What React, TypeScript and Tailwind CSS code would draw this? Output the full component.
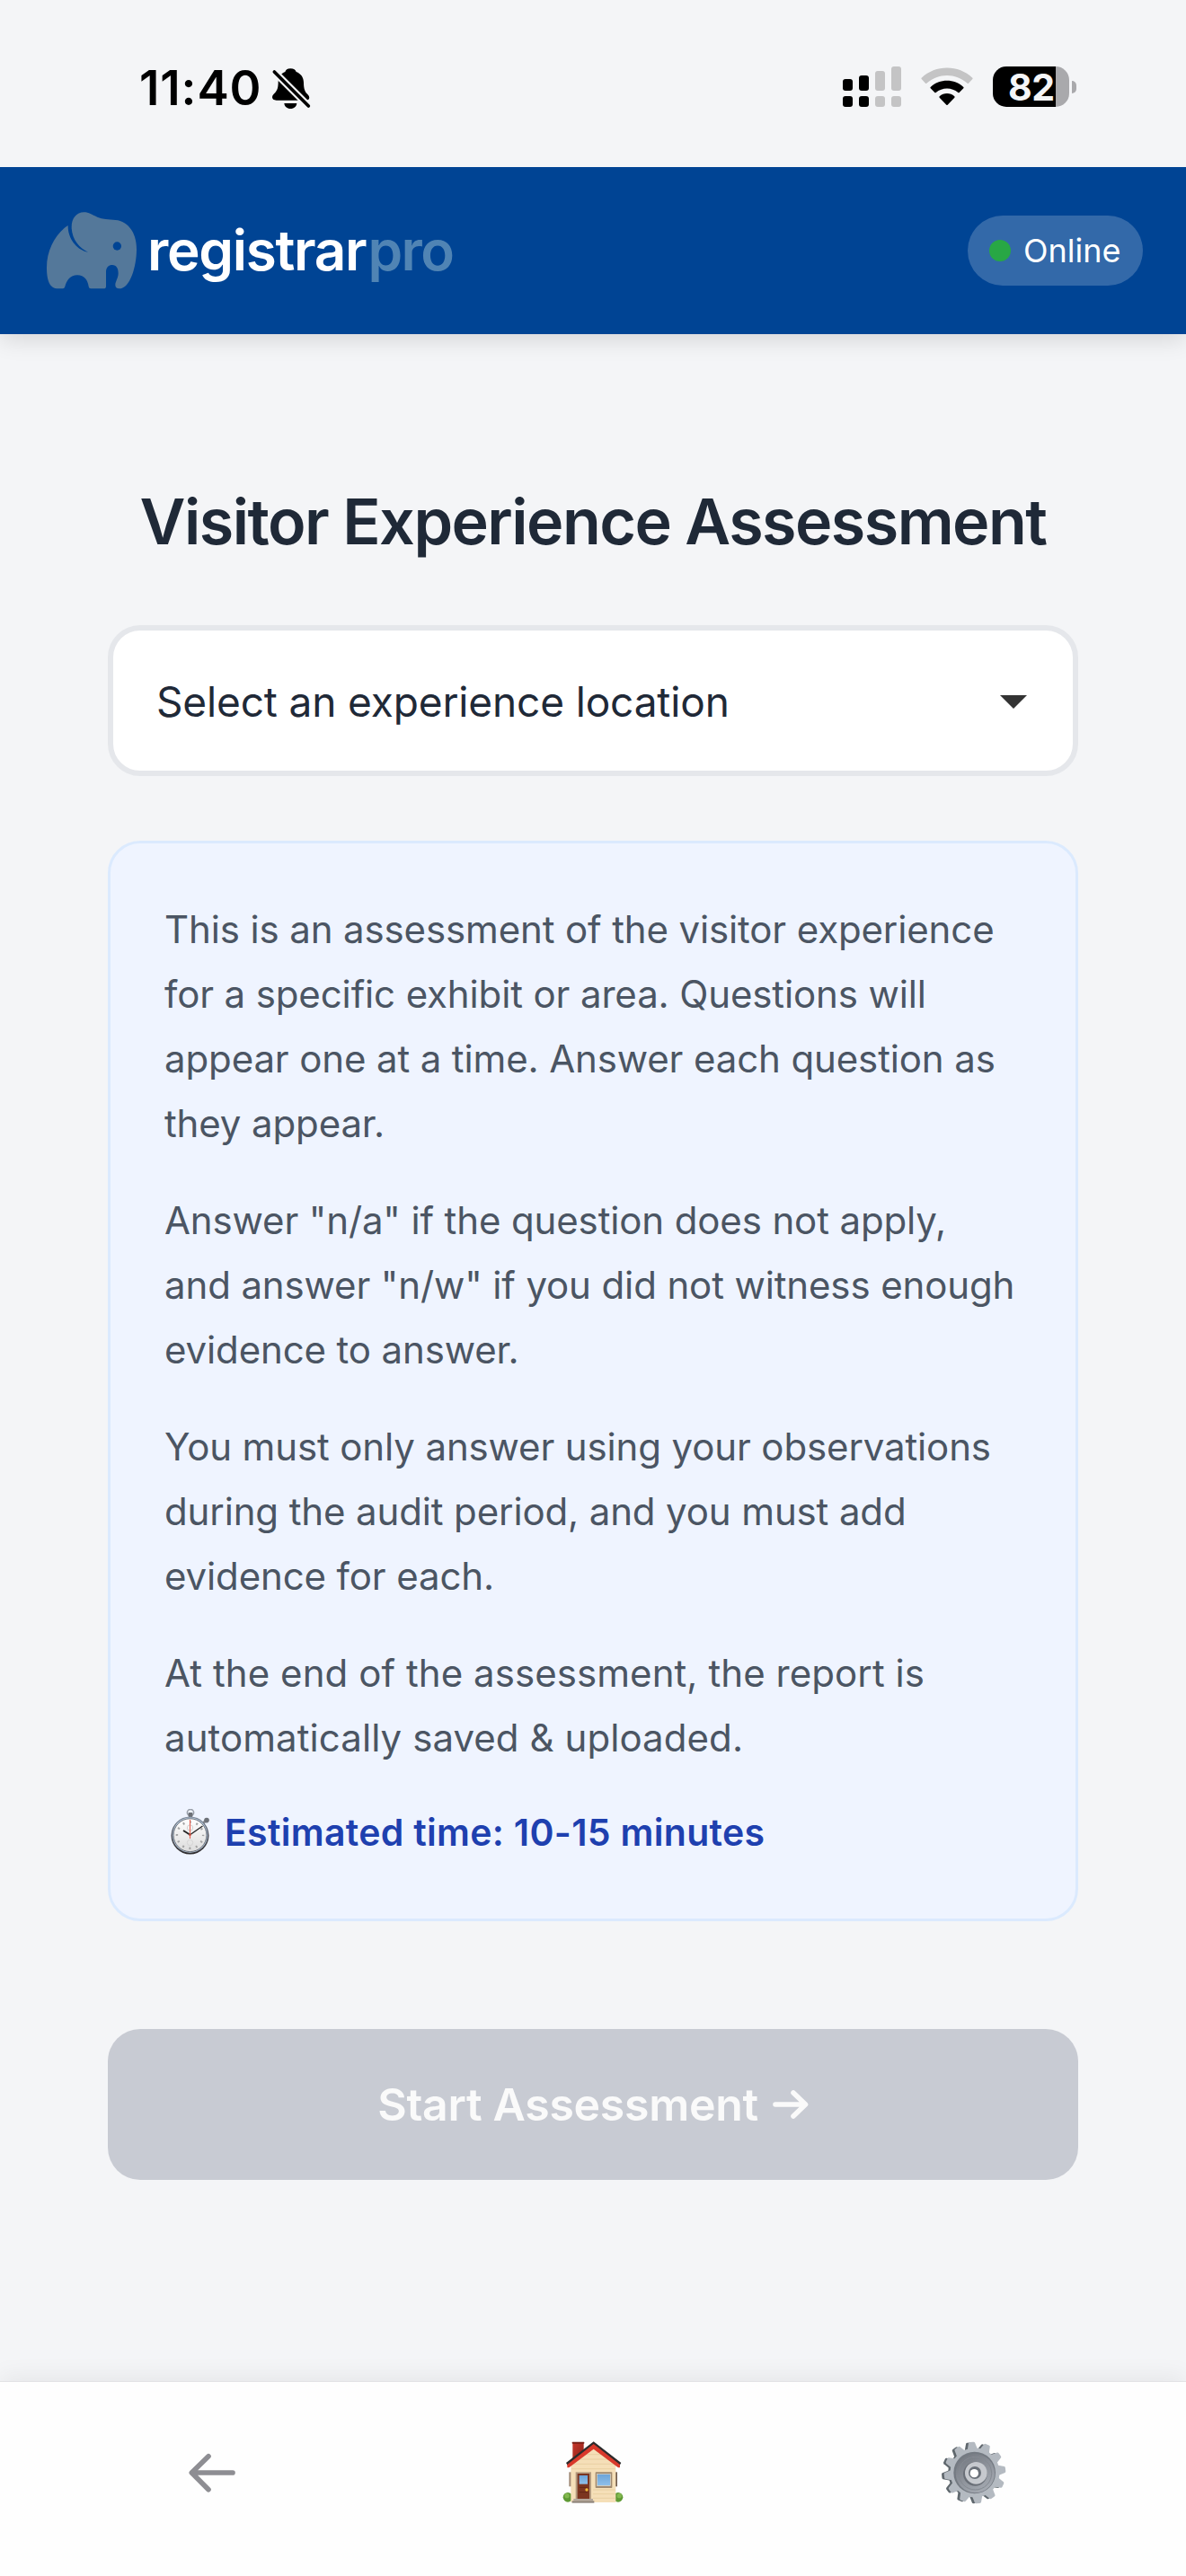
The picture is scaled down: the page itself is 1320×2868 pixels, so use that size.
import { useState } from "react";
import type { ReactNode } from "react";

const GEAR_TEETH = [0, 30, 60, 90, 120, 150, 180, 210, 240, 270, 300, 330];

const INSTRUCTIONS = [
  "This is an assessment of the visitor experience for a specific exhibit or area. Questions will appear one at a time. Answer each question as they appear.",
  'Answer "n/a" if the question does not apply, and answer "n/w" if you did not witness enough evidence to answer.',
  "You must only answer using your observations during the audit period, and you must add evidence for each.",
  "At the end of the assessment, the report is automatically saved & uploaded.",
];

function BellOffIcon() {
  return (
    <svg className="mt-[2px] ml-[11px] h-[48px] w-[45px]" viewBox="515 70 135 144">
      <path
        d="M579 77C590 77 596 82 598 88C614 94 623 107 623 124C623 146 628 156 636 163C641 168 643 173 641 178C639 182 634 183 629 183H532C523 183 518 179 518 173C518 166 523 163 528 157C535 149 538 141 538 122C538 104 547 93 561 88C563 82 568 77 579 77Z"
        fill="#000"
      />
      <path d="M558 193H600C599 204 591 211 579 211C567 211 559 204 558 193Z" fill="#000" />
      <path d="M525 88L639 202" stroke="#f4f5f7" strokeWidth="24" />
      <path d="M525 88L639 202" stroke="#000" strokeWidth="11" strokeLinecap="round" />
    </svg>
  );
}

function SignalIcon() {
  return (
    <svg className="h-[45px] w-[65px]" viewBox="81 72 195 135">
      <g fill="#000">
        <rect x="81" y="114" width="33" height="39" rx="9" />
        <rect x="135" y="102" width="33" height="51" rx="9" />
        <rect x="81" y="171" width="33" height="36" rx="9" />
        <rect x="135" y="171" width="33" height="36" rx="9" />
      </g>
      <g fill="#c4c4c5">
        <rect x="189" y="87" width="33" height="66" rx="9" />
        <rect x="243" y="72" width="33" height="81" rx="9" />
        <rect x="189" y="171" width="33" height="36" rx="9" />
        <rect x="243" y="171" width="33" height="36" rx="9" />
      </g>
    </svg>
  );
}

function WifiIcon() {
  return (
    <svg className="h-[43px] w-[58px]" viewBox="344 75 174 129">
      <path
        d="M346 110C392 65 470 65 516 110Q518 112 516 114L503 128Q501 130 499 128C460 93 402 93 363 128Q361 130 359 128L346 114Q344 112 346 110Z"
        fill="#c4c4c5"
      />
      <path
        d="M376 141C406 112 456 112 486 141Q488 143 486 145L472 159Q470 161 468 159C447 141 415 141 394 159Q392 161 390 159L376 145Q374 143 376 141Z"
        fill="#000"
      />
      <path d="M406 172C420 159 442 159 456 172Q458 174 456 176L433 200Q431 202 429 200L406 176Q404 174 406 172Z" fill="#000" />
    </svg>
  );
}

function Battery({ level }: { level: number }) {
  return (
    <div className="flex items-center gap-[3px]">
      <div className="flex h-[45px] w-[85px] items-center rounded-[15px] bg-[linear-gradient(90deg,#000_70px,#a9a9ac_70px)] pl-[17px]">
        <span className="text-[41px] leading-[50px] font-bold tracking-[-0.5px] text-[#f4f5f7]">{level}</span>
      </div>
      <div className="h-[14px] w-[5px] rounded-r-full bg-[#a9a9ac]" />
    </div>
  );
}

function StatusBar() {
  return (
    <div className="relative z-10 flex h-[186px] items-center justify-between bg-[#f4f5f7] pt-[7px] pr-[122px] pl-[155px]">
      <div className="flex items-center">
        <span className="mt-[3px] text-[53px] leading-[60px] font-semibold tracking-[0.9px] text-black">11:40</span>
        <BellOffIcon />
      </div>
      <div className="flex items-center gap-[22px]">
        <SignalIcon />
        <WifiIcon />
        <Battery level={82} />
      </div>
    </div>
  );
}

function ElephantLogo() {
  return (
    <svg className="h-[86px] w-[101px]" viewBox="66 65 303 258">
      <path
        d="M137 110C96 136 66 192 66 250C66 293 75 321 105 321H120Q125 321 127 314C132 294 145 276 168 276C192 276 203 293 206 314Q207 321 213 321H256Q264 321 264 313V266C264 250 273 242 285 242C299 242 305 254 305 270C305 286 295 298 295 309Q295 321 308 321C345 321 366 245 366 190C366 130 334 95 296 92C272 90 252 89 235 82C216 74 208 66 190 66C165 66 149 87 149 115C149 155 175 186 204 199C170 194 136 157 137 110Z"
        fill="#54789a"
      />
      <circle cx="301" cy="179" r="14" fill="#004494" />
    </svg>
  );
}

function Header() {
  return (
    <header className="relative flex h-[186px] items-center justify-between bg-[#004494] pr-[48px] pl-[52px] shadow-[0_6px_24px_rgba(0,0,0,0.13)]">
      <div className="flex items-center gap-[11px]">
        <ElephantLogo />
        <div className="flex text-[62px] leading-[72px] font-semibold">
          <span className="tracking-[-1.3px] text-white">registrar</span>
          <span className="ml-[2px] tracking-[-1.6px] text-[#5084b4]">pro</span>
        </div>
      </div>
      <div className="flex h-[78px] w-[195px] items-center gap-[14px] rounded-full bg-white/20 pl-[24px]">
        <span className="h-6 w-6 rounded-full bg-[#28a745]" />
        <span className="text-[36px] leading-[44px] text-white">Online</span>
      </div>
    </header>
  );
}

function LocationSelect() {
  return (
    <button className="flex h-[168px] w-full items-center justify-between rounded-[36px] border-[6px] border-[#e5e7eb] bg-white pr-[51px] pl-[48px]">
      <span className="pt-[2px] text-[46px] tracking-[-0.14px] text-[#1f2937]">Select an experience location</span>
      <svg className="mt-[3px] h-[15px] w-[30px]" viewBox="0 0 30 15">
        <path d="M0 0H30L15 15Z" fill="#333" />
      </svg>
    </button>
  );
}

function StopwatchIcon() {
  return (
    <svg className="h-[52px] w-[44px]" viewBox="0 0 44 52">
      <defs>
        <linearGradient id="rim" x1="0" y1="0" x2="0" y2="1">
          <stop offset="0" stopColor="#7e8896" />
          <stop offset="0.5" stopColor="#4e4f55" />
          <stop offset="1" stopColor="#2e2b2c" />
        </linearGradient>
        <linearGradient id="face" x1="0" y1="0" x2="0" y2="1">
          <stop offset="0" stopColor="#fff" />
          <stop offset="1" stopColor="#dcdcdc" />
        </linearGradient>
      </defs>
      <circle cx="22" cy="4" r="3.6" fill="none" stroke="#9aa0aa" strokeWidth="1.6" />
      <rect x="19.6" y="4" width="4.8" height="5" rx="1" fill="#6c7077" />
      <path d="M36 16L40 12" stroke="#85898f" strokeWidth="3" />
      <circle cx="40" cy="12.6" r="2.8" fill="#6c7077" />
      <circle cx="21.5" cy="29.5" r="21" fill="url(#rim)" />
      <circle cx="21.5" cy="29.2" r="19.6" fill="#b4c8de" />
      <circle cx="21.5" cy="29.2" r="18.4" fill="url(#face)" stroke="#55585e" strokeWidth="0.8" />
      <circle cx="21.5" cy="29.2" r="14.6" fill="none" stroke="#a3a3a3" strokeWidth="2.4" strokeDasharray="2 5.64" strokeDashoffset="1" />
      <circle cx="21.5" cy="21" r="3.2" fill="none" stroke="#c9c9c9" strokeWidth="0.8" />
      <circle cx="21.5" cy="37.5" r="3.2" fill="none" stroke="#d0d0d0" strokeWidth="0.8" />
      <path d="M14 24L21.5 28.7" stroke="#222" strokeWidth="1.9" />
      <path d="M21.5 28.7L35.5 19" stroke="#222" strokeWidth="1.3" />
      <path d="M21.5 12V33" stroke="#e8604f" strokeWidth="1.1" />
      <circle cx="21.5" cy="28.7" r="1.3" fill="#c8503f" />
    </svg>
  );
}

function InfoCard() {
  return (
    <section className="mt-[72px] h-[1203px] rounded-[36px] border-[3px] border-[#dbeafe] bg-[#eff4ff] p-[60px]">
      <div className="space-y-[36px]">
        {INSTRUCTIONS.map((text) => (
          <p key={text} className="text-[42px] leading-[72px] tracking-[-0.13px] text-[#4b5563] last-of-type:tracking-[0.07px]">
            {text}
          </p>
        ))}
        <div className="flex h-[66px] items-center pl-[7px]">
          <StopwatchIcon />
          <span className="ml-[16px] text-[41px] leading-[66px] font-semibold tracking-[0.3px] text-[#1e40af]">
            Estimated time: 10-15 minutes
          </span>
        </div>
      </div>
    </section>
  );
}

function StartButton() {
  return (
    <button disabled className="mt-[120px] flex h-[168px] w-full items-center justify-center rounded-[36px] bg-[#c8cbd3] text-[#fafafa]">
      <span className="text-[50px] leading-[60px] font-semibold tracking-[-0.3px]">Start Assessment</span>
      <svg className="ml-[16px] h-[34px] w-[40px]" viewBox="0 0 40 34" fill="none" stroke="currentColor" strokeWidth="5.6" strokeLinecap="round" strokeLinejoin="round">
        <path d="M3 17H36M23 4L36.5 17L23 30" />
      </svg>
    </button>
  );
}

function BackIcon() {
  return (
    <svg className="h-[44px] w-[52px]" viewBox="88 271 156 132" fill="none" stroke="#8e8e93" strokeWidth="17" strokeLinecap="round" strokeLinejoin="round">
      <path d="M235 337H99M154 282L98 337L154 393" />
    </svg>
  );
}

function HouseIcon() {
  return (
    <svg className="h-[69px] w-[68px]" viewBox="76 86 204 207">
      <defs>
        <linearGradient id="chimney" x1="0" y1="0" x2="1" y2="1">
          <stop offset="0" stopColor="#c8382c" />
          <stop offset="1" stopColor="#8a1f18" />
        </linearGradient>
        <linearGradient id="glass" x1="0" y1="0" x2="0" y2="1">
          <stop offset="0" stopColor="#6ba3d8" />
          <stop offset="1" stopColor="#8fc0ea" />
        </linearGradient>
      </defs>
      <circle cx="94" cy="273" r="16" fill="#5f9a34" />
      <circle cx="262" cy="273" r="16" fill="#5f9a34" />
      <circle cx="91" cy="268" r="8" fill="#83b84f" />
      <circle cx="266" cy="268" r="8" fill="#83b84f" />
      <rect x="98" y="189" width="8" height="48" fill="#a08a75" />
      <rect x="251" y="189" width="8" height="48" fill="#6f5c4d" />
      <rect x="110" y="90" width="37" height="60" fill="url(#chimney)" />
      <rect x="108" y="88" width="41" height="6" rx="2" fill="#7a2119" />
      <path d="M104 160L180 104L254 160V290H104Z" fill="#f5dfb8" />
      <path d="M150 130H210M128 146H234M106 162H252M106 178H252M178 248H252M178 262H252M178 276H252" stroke="#e3c898" strokeWidth="2" />
      <path d="M88 158L180 87L272 158L266 168L180 101L94 168Z" fill="#2c2b2c" />
      <path d="M92 164L180 95L268 164V174H262L180 112L98 174H92Z" fill="#d9392b" />
      <rect x="120" y="189" width="52" height="91" fill="#b39a7e" />
      <rect x="126" y="194" width="40" height="84" fill="#7c3520" />
      <rect x="132" y="200" width="28" height="29" fill="url(#glass)" />
      <path d="M132 240H160M132 256H160" stroke="#632614" strokeWidth="3" />
      <circle cx="157" cy="248" r="5" fill="#f2bd3a" />
      <rect x="186" y="189" width="56" height="53" rx="2" fill="#a08a70" />
      <rect x="192" y="195" width="44" height="40" fill="url(#glass)" stroke="#e9dcc4" strokeWidth="2" />
      <rect x="113" y="278" width="65" height="7" fill="#b3a89d" />
      <rect x="108" y="285" width="74" height="7" fill="#8f857c" />
    </svg>
  );
}

function GearTeeth() {
  return (
    <>
      {GEAR_TEETH.map((angle) => (
        <path key={angle} d="M-18 -78L-11 -103Q-10 -106 -6 -106H6Q10 -106 11 -103L18 -78Z" transform={`rotate(${angle - 6})`} />
      ))}
    </>
  );
}

function GearIcon() {
  return (
    <svg className="h-[72px] w-[72px]" viewBox="-108 -108 216 216">
      <defs>
        <linearGradient id="groove" x1="0" y1="0" x2="0.6" y2="1">
          <stop offset="0" stopColor="#6f747c" />
          <stop offset="1" stopColor="#a3a8b0" />
        </linearGradient>
      </defs>
      <g transform="translate(-6 1) scale(0.96)" fill="#5f676d">
        <GearTeeth />
        <circle r="84" />
      </g>
      <g transform="translate(3 0) scale(0.97)" fill="#b4bac1">
        <GearTeeth />
        <circle r="85" />
      </g>
      <circle cx="2" r="70" fill="#747a82" />
      <circle cx="4" cy="2" r="65" fill="url(#groove)" />
      <circle cx="4" cy="2" r="55" fill="none" stroke="#858a92" strokeWidth="3" />
      <circle cx="4" cy="4" r="40" fill="#6a6f77" />
      <circle cx="7" cy="1" r="37" fill="#c6c9ce" />
      <circle cx="3" cy="0" r="21" fill="#6a7078" />
      <circle cx="1" cy="2" r="14" fill="#fff" />
    </svg>
  );
}

interface NavButtonProps {
  label: string;
  children: ReactNode;
}

function NavButton({ label, children }: NavButtonProps) {
  return (
    <button aria-label={label} className="flex h-full flex-1 items-center justify-center">
      {children}
    </button>
  );
}

function BottomNav() {
  return (
    <nav className="relative flex h-[217px] items-center border-t border-[#e3e3e6] bg-[#fefefe] px-[24px] pb-[15px] shadow-[0_-6px_24px_rgba(0,0,0,0.06)]">
      <NavButton label="Back">
        <BackIcon />
      </NavButton>
      <NavButton label="Home">
        <HouseIcon />
      </NavButton>
      <NavButton label="Settings">
        <GearIcon />
      </NavButton>
    </nav>
  );
}

export default function App() {
  const [title] = useState("Visitor Experience Assessment");

  return (
    <div className="flex h-[2868px] w-[1320px] flex-col overflow-hidden bg-[#f4f5f7] font-['Inter',sans-serif]">
      <StatusBar />
      <Header />
      <main className="flex-1 px-[120px] pt-[167px]">
        <h1 className="mb-[73px] text-center text-[70px] leading-[84px] font-semibold tracking-[-1.55px] whitespace-nowrap text-[#1f2937]">
          {title}
        </h1>
        <LocationSelect />
        <InfoCard />
        <StartButton />
      </main>
      <BottomNav />
    </div>
  );
}
